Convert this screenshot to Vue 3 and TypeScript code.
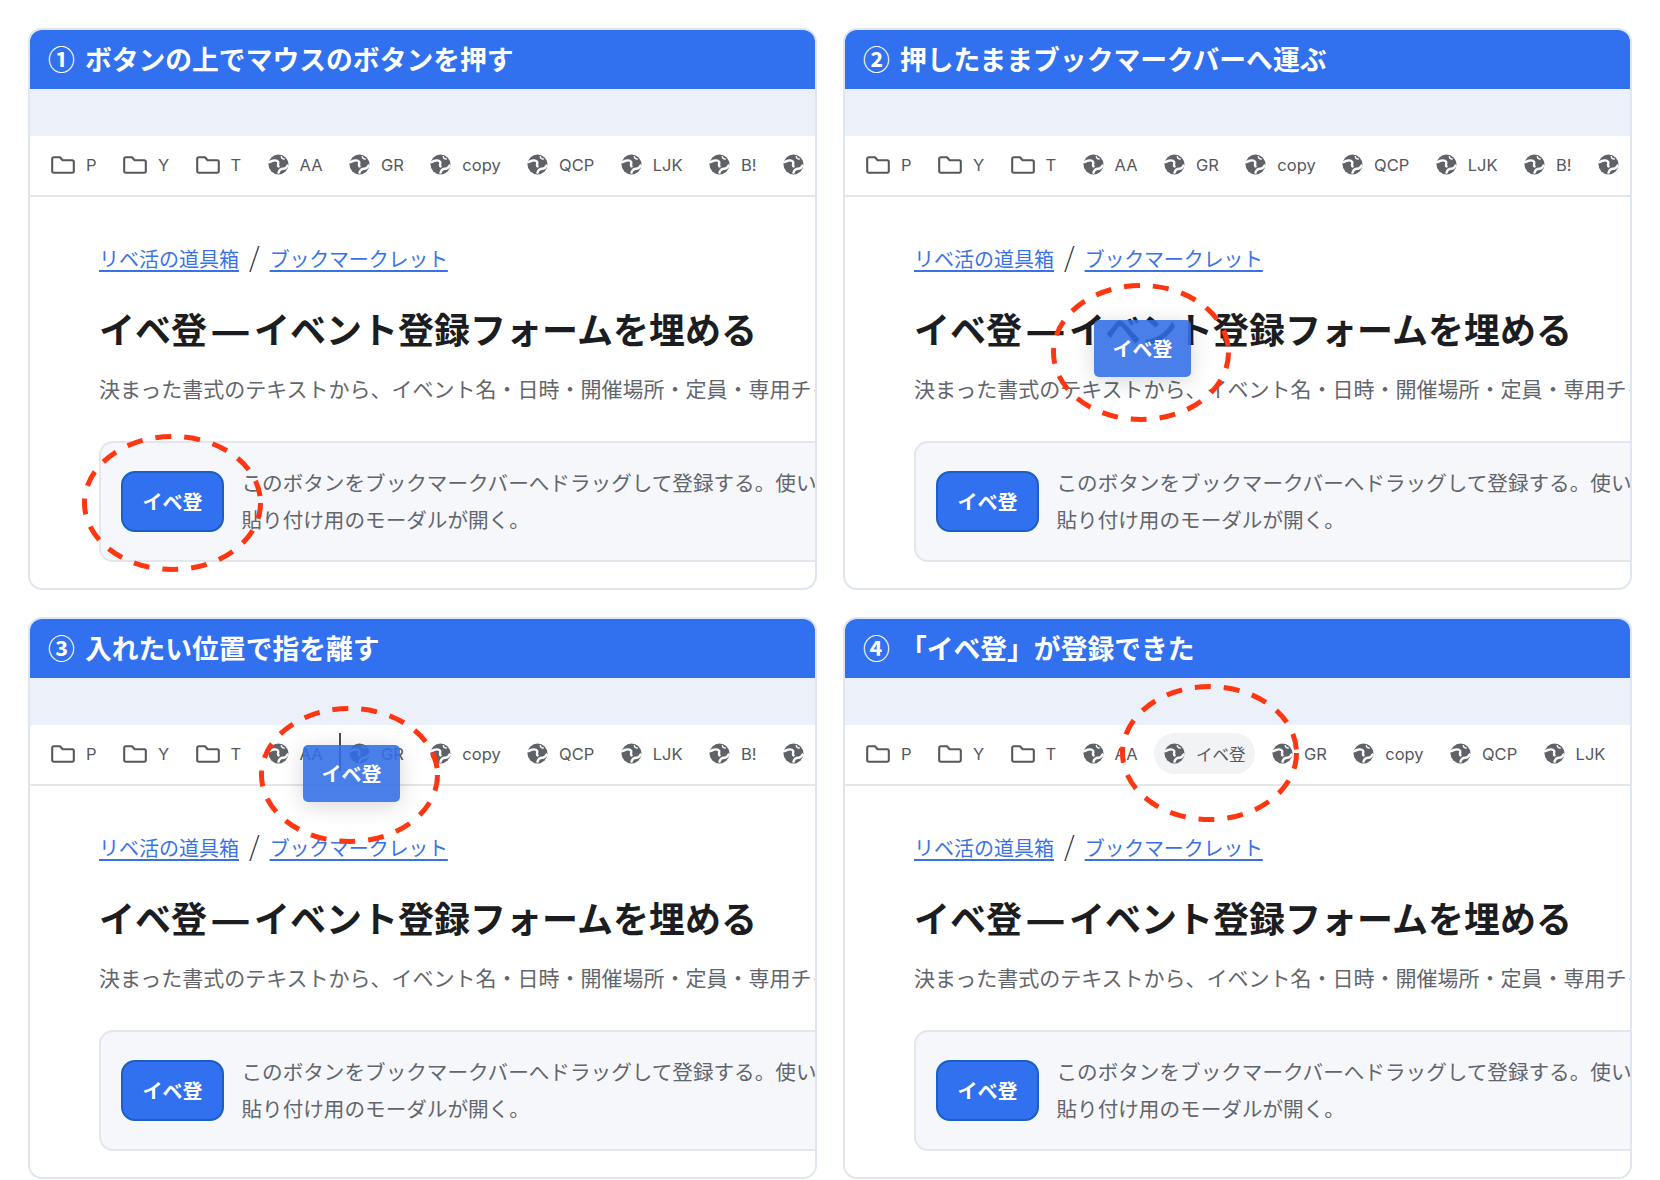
<script setup lang="ts">
interface Mark { label: string; kind: 'folder' | 'globe'; active?: boolean }

const base: Mark[] = [
  { label: 'P', kind: 'folder' },
  { label: 'Y', kind: 'folder' },
  { label: 'T', kind: 'folder' },
  { label: 'AA', kind: 'globe' },
  { label: 'GR', kind: 'globe' },
  { label: 'copy', kind: 'globe' },
  { label: 'QCP', kind: 'globe' },
  { label: 'LJK', kind: 'globe' },
  { label: 'B!', kind: 'globe' },
  { label: 'Googl', kind: 'globe' },
]

const withNew: Mark[] = [
  ...base.slice(0, 4),
  { label: 'イベ登', kind: 'globe', active: true },
  ...base.slice(4, 8),
]

const steps = [
  { id: 1, title: '① ボタンの上でマウスのボタンを押す', marks: base, w: 181, h: 138, ghost: false, line: false },
  { id: 2, title: '② 押したままブックマークバーへ運ぶ', marks: base, w: 180, h: 139, ghost: true, line: false },
  { id: 3, title: '③ 入れたい位置で指を離す', marks: base, w: 181, h: 138, ghost: true, line: true },
  { id: 4, title: '④ 「イベ登」が登録できた', marks: withNew, w: 179, h: 138, ghost: false, line: false },
]
</script>

<template>
  <main class="sheet">
    <section v-for="s in steps" :key="s.id" class="card" :class="`step-${s.id}`">
      <h2 class="head">{{ s.title }}</h2>
      <div class="tabstrip"></div>
      <nav class="bar">
        <span v-for="m in s.marks" :key="m.label" class="mark" :class="{ active: m.active }">
          <svg v-if="m.kind === 'folder'" class="folder" viewBox="0 0 24 18">
            <path d="M1.200 2.800a1.600 1.600 0 0 1 1.600-1.600h6.200l2.600 3h9.600a1.600 1.600 0 0 1 1.600 1.600v9.400a1.600 1.600 0 0 1-1.600 1.600H2.800a1.600 1.600 0 0 1-1.600-1.600z" fill="none" stroke="#55585d" stroke-width="2.100" stroke-linejoin="round" />
          </svg>
          <svg v-else class="globe" viewBox="0 0 22 22">
            <circle cx="11" cy="11" r="10.500" fill="#5f6368" />
            <path d="M1.500 8.500C5 6.500 9 6 10.500 8c1 1.500-1 3.500.5 5" fill="none" stroke="#fff" stroke-width="2.500" stroke-linecap="round" />
            <path d="M11 19.500c1-3.500 3-4 5-4s3.500-1.500 4.500-3.500" fill="none" stroke="#fff" stroke-width="2.500" stroke-linecap="round" />
            <path d="M14 3c.3 1.500 1.400 2.400 3 2.200" fill="none" stroke="#fff" stroke-width="1.600" stroke-linecap="round" />
          </svg>
          <span class="mark-label">{{ m.label }}</span>
        </span>
      </nav>
      <div class="page">
        <p class="crumbs"><a>リベ活の道具箱</a><span class="slash">/</span><a class="second">ブックマークレット</a></p>
        <h1 class="title">イベ登 — イベント登録フォームを埋める</h1>
        <p class="lead">決まった書式のテキストから、イベント名・日時・開催場所・定員・専用チャットのURLを読み取り、登録フォームへ入力する。</p>
        <div class="hint">
          <span class="tool">イベ登</span>
          <p class="hint-text">このボタンをブックマークバーへドラッグして登録する。使い方は、フォームの画面で押すと<br />貼り付け用のモーダルが開く。</p>
        </div>
      </div>
      <span v-if="s.line" class="caret"></span>
      <span v-if="s.ghost" class="ghost">イベ登</span>
      <svg class="ring" :width="s.w" :height="s.h" :viewBox="`0 0 ${s.w} ${s.h}`">
        <ellipse :cx="s.w / 2" :cy="s.h / 2" :rx="s.w / 2 - 2.500" :ry="s.h / 2 - 2.500" />
      </svg>
    </section>
  </main>
</template>

<style>
html, body { background: #fff; }
</style>

<style scoped>
.sheet {
  display: grid;
  grid-template-columns: 789px 789px;
  grid-template-rows: 562px 562px;
  column-gap: 26px;
  row-gap: 27px;
  padding: 28px 0 0 28px;
  width: 1660px;
  height: 1180px;
  box-sizing: border-box;
  font-family: "Noto Sans CJK JP", "Inter", sans-serif;
}
.card {
  position: relative;
  overflow: hidden;
  border: 2px solid #dfe6f1;
  border-radius: 14px;
  background: #fff;
}
.head {
  margin: 0;
  height: 59px;
  padding: 0 0 0 18px;
  background: #3170ee;
  color: #fff;
  font-size: 26.800px;
  font-weight: 700;
  line-height: 57px;
  word-spacing: 4px;
  white-space: nowrap;
}
.tabstrip { height: 47px; background: #ecf0f9; }
.bar {
  display: flex;
  align-items: center;
  gap: 6.400px;
  height: 61px;
  padding: 0 0 2px 11px;
  box-sizing: border-box;
  border-bottom: 2px solid #e5e6e8;
  overflow: hidden;
  white-space: nowrap;
}
.mark {
  display: inline-flex;
  align-items: center;
  flex: none;
  height: 41px;
  padding: 0 10px;
  border-radius: 21px;
  color: #55585d;
  font-family: "Inter", "Noto Sans CJK JP", sans-serif;
  font-size: 16.500px;
}
.mark.active { background: #f1f3f4; }
.folder { width: 24px; height: 18px; margin-right: 11px; flex: none; }
.globe { width: 21px; height: 21px; margin-right: 11px; flex: none; }
.page { padding: 46px 0 0 69px; width: 1000px; }
.crumbs {
  margin: 0;
  height: 30px;
  font-size: 20px;
  line-height: 32px;
  color: #2b2d33;
}
.crumbs a { color: #3a72e6; text-decoration: underline; text-underline-offset: 3px; }
.crumbs a.second { letter-spacing: -0.200px; }
.slash { margin: 0 10px; font-size: 27px; font-weight: 300; line-height: 0; }
.title {
  margin: 32px 0 0;
  height: 52px;
  font-family: "Inter", "Noto Sans CJK JP", sans-serif;
  font-size: 36px;
  font-weight: 700;
  line-height: 52px;
  color: #1c1d20;
  word-spacing: -3px;
  white-space: nowrap;
}
.lead {
  margin: 14px 0 0;
  height: 34px;
  font-size: 21px;
  line-height: 34px;
  color: #62656c;
  white-space: nowrap;
}
.hint {
  display: flex;
  align-items: center;
  gap: 17.500px;
  margin-top: 36px;
  height: 121px;
  box-sizing: border-box;
  padding-left: 20px;
  background: #f6f7fb;
  border: 2px solid #e4e6ee;
  border-radius: 14px;
}
.tool {
  display: flex;
  align-items: center;
  justify-content: center;
  width: 103px;
  height: 61px;
  box-sizing: border-box;
  flex: none;
  border: 2.500px solid #1a5fc6;
  border-radius: 14px;
  background: #3170ee;
  color: #fff;
  font-size: 20px;
  font-weight: 700;
}
.hint-text {
  margin: 0 0 2px;
  font-size: 20.600px;
  line-height: 36.500px;
  color: #62656c;
  white-space: nowrap;
}
.ring { position: absolute; overflow: visible; pointer-events: none; }
.ring ellipse {
  fill: none;
  stroke: #ff3612;
  stroke-width: 5;
  stroke-dasharray: 16 13;
}
.step-1 .ring { left: 52px; top: 404px; }
.step-2 .ring { left: 206px; top: 253px; }
.step-3 .ring { left: 229px; top: 87px; }
.step-4 .ring { left: 275px; top: 65px; }
.ghost {
  position: absolute;
  display: flex;
  align-items: center;
  justify-content: center;
  width: 97px;
  height: 57px;
  border-radius: 5px;
  background: rgba(49, 109, 230, 0.88);
  box-shadow: 0 4px 22px rgba(0, 0, 0, 0.16);
  color: #fff;
  font-size: 20px;
  font-weight: 700;
}
.step-2 .ghost { left: 249px; top: 290px; }
.step-3 .ghost { left: 273px; top: 126px; }
.caret {
  position: absolute;
  left: 309px;
  top: 114px;
  width: 2px;
  height: 38px;
  background: #4a4d52;
}
</style>
